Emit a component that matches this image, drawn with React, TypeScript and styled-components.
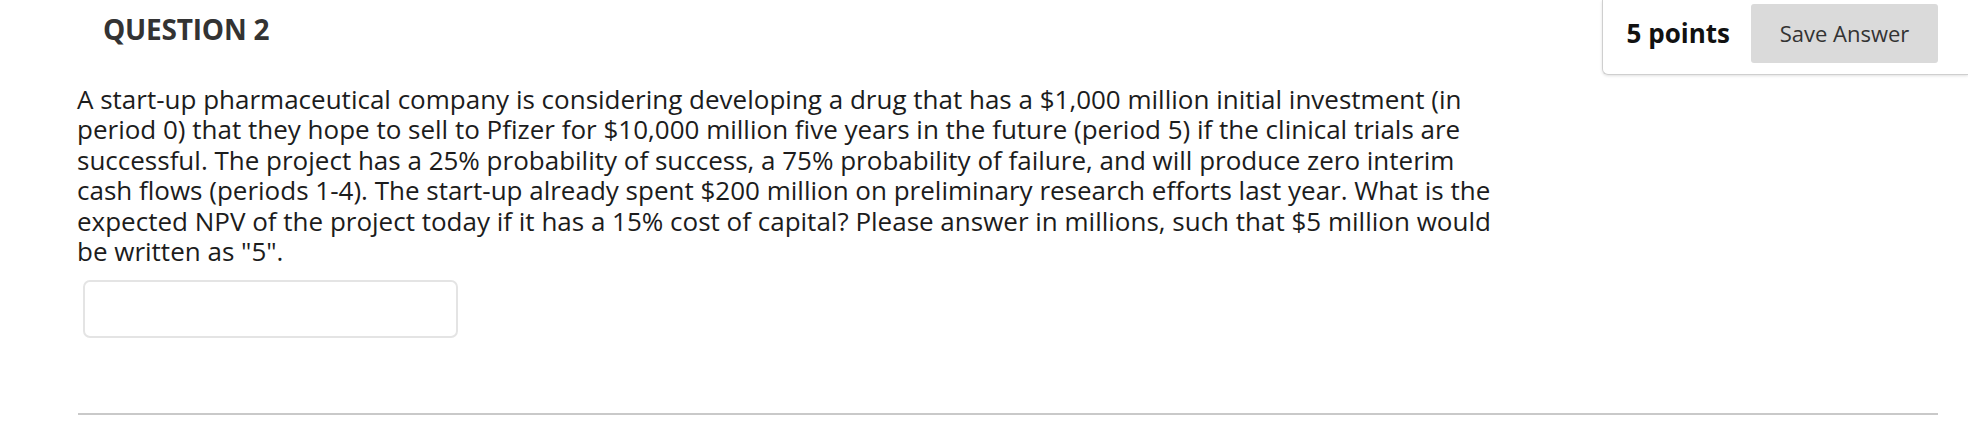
import React from "react";
import styled, { createGlobalStyle } from "styled-components";

const GlobalStyle = createGlobalStyle`
  html, body {
    margin: 0;
    padding: 0;
    background: #ffffff;
    font-family: "Open Sans", "Liberation Sans", sans-serif;
  }
`;

const Page = styled.div`
  width: 1968px;
  height: 434px;
  display: flex;
  flex-direction: column;
  background: #fff;
  overflow: hidden;
`;

const HeaderRow = styled.div`
  display: flex;
  justify-content: space-between;
  align-items: flex-start;
`;

const Heading = styled.h2`
  margin: 12px 0 0 103px;
  font-size: 28px;
  line-height: 34px;
  font-weight: 700;
  color: #333333;
  letter-spacing: -0.2px;
`;

const PointsBox = styled.div`
  display: flex;
  align-items: center;
  gap: 21px;
  height: 75px;
  box-sizing: border-box;
  padding: 4px 30px 12px 24px;
  border-left: 1px solid #cfcfcf;
  border-bottom: 1px solid #cfcfcf;
  border-bottom-left-radius: 6px;
  box-shadow: 0 1px 3px rgba(0, 0, 0, 0.12);
`;

const Points = styled.span`
  font-size: 26px;
  font-weight: 700;
  color: #111111;
  line-height: 59px;
`;

const SaveButton = styled.button`
  width: 187px;
  height: 59px;
  border: none;
  border-radius: 3px;
  background: #dadada;
  color: #333333;
  font-family: "Open Sans", "Liberation Sans", sans-serif;
  font-size: 22px;
  padding: 0;
  cursor: pointer;
`;

const QuestionText = styled.p`
  margin: 9px 0 0 77px;
  width: 1428px;
  font-size: 26px;
  line-height: 30.4px;
  color: #1c1c1c;
  letter-spacing: 0;
`;

const AnswerInput = styled.input`
  margin: 14px 0 0 83px;
  width: 375px;
  height: 58px;
  box-sizing: border-box;
  border: 2px solid #e4e4e4;
  border-radius: 7px;
  outline: none;
  background: #fff;
`;

const Divider = styled.hr`
  margin: 75px 0 0 78px;
  width: 1860px;
  height: 2px;
  border: none;
  background: #c9c9c9;
`;

export default function App() {
  return (
    <>
      <GlobalStyle />
      <Page>
        <HeaderRow>
          <Heading>QUESTION 2</Heading>
          <PointsBox>
            <Points>5 points</Points>
            <SaveButton>Save Answer</SaveButton>
          </PointsBox>
        </HeaderRow>
        <QuestionText>
          A start-up pharmaceutical company is considering developing a drug that has a $1,000 million initial
          investment (in period 0) that they hope to sell to Pfizer for $10,000 million five years in the future
          (period 5) if the clinical trials are successful. The project has a 25% probability of success, a 75%
          probability of failure, and will produce zero interim cash flows (periods 1-4). The start-up already
          spent $200 million on preliminary research efforts last year. What is the expected NPV of the project
          today if it has a 15% cost of capital? Please answer in millions, such that $5 million would be written
          as "5".
        </QuestionText>
        <AnswerInput type="text" />
        <Divider />
      </Page>
    </>
  );
}
